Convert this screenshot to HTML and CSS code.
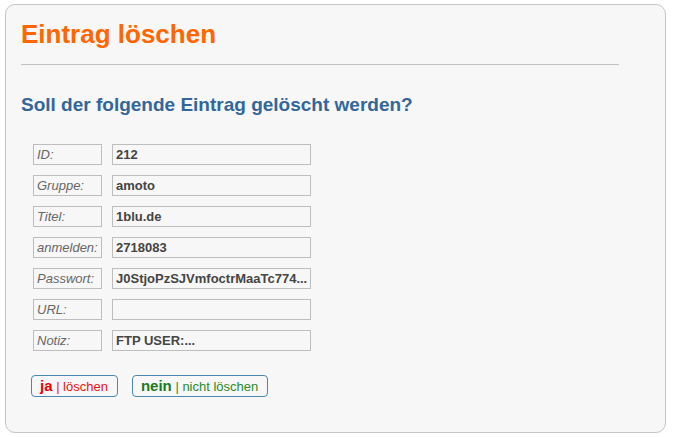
FILE: index.html
```html
<!DOCTYPE html>
<html lang="de">
<head>
<meta charset="utf-8">
<title>Eintrag löschen</title>
<link rel="stylesheet" href="styles.css">
</head>
<body>
<div class="panel">
  <h1 class="title">Eintrag löschen</h1>
  <hr class="rule">
  <h2 class="question">Soll der folgende Eintrag gelöscht werden?</h2>
  <table class="entry">
    <tr><td class="lbl">ID:</td><td class="val">212</td></tr>
    <tr><td class="lbl">Gruppe:</td><td class="val">amoto</td></tr>
    <tr><td class="lbl">Titel:</td><td class="val">1blu.de</td></tr>
    <tr><td class="lbl">anmelden:</td><td class="val">2718083</td></tr>
    <tr><td class="lbl">Passwort:</td><td class="val">J0StjoPzSJVmfoctrMaaTc774...</td></tr>
    <tr><td class="lbl">URL:</td><td class="val"></td></tr>
    <tr><td class="lbl">Notiz:</td><td class="val">FTP USER:...</td></tr>
  </table>
  <div class="actions">
    <a class="btn btn-yes" href="#"><b>ja</b> | löschen</a>
    <a class="btn btn-no" href="#"><b>nein</b> | nicht löschen</a>
  </div>
</div>
</body>
</html>
```
FILE: styles.css
```css
html, body {
  margin: 0;
  padding: 0;
  background: #ffffff;
  font-family: Arial, "Liberation Sans", sans-serif;
}
.panel {
  margin: 4px 7px 5px 5px;
  box-sizing: border-box;
  height: 429px;
  border: 1px solid #c4c4c4;
  border-radius: 10px;
  background: #f7f7f7;
  padding: 0 15px;
}
.title {
  margin: 0;
  padding-top: 14px;
  font-size: 26px;
  line-height: 30px;
  font-weight: bold;
  color: #ff6600;
}
.rule {
  width: 598px;
  margin: 15px 0 0 0;
  border: 0;
  border-top: 1px solid #c2c2c2;
  height: 0;
}
.question {
  margin: 29px 0 0 0;
  font-size: 19px;
  line-height: 22px;
  font-weight: bold;
  color: #336699;
}
.entry {
  margin: 18px 0 0 2px;
  border-collapse: separate;
  border-spacing: 10px;
}
.entry td {
  height: 19px;
  padding: 0 3px;
  border: 1px solid #bdbdbd;
  font-size: 13px;
  line-height: 19px;
  color: #444;
}
.lbl {
  width: 61px;
  font-style: italic;
  color: #666 !important;
}
.val {
  width: 190px;
  font-weight: bold;
  color: #3a3a3a;
}
.actions {
  margin-top: 14px;
  margin-left: 10px;
  display: flex;
  gap: 14px;
}
.btn {
  display: inline-block;
  height: 20px;
  line-height: 20px;
  padding: 0 9px 0 8px;
  border: 1px solid #4a88b0;
  border-radius: 4px;
  font-size: 13px;
  text-decoration: none;
}
.btn b {
  font-size: 15px;
}
.btn-yes { color: #ee1111; }
.btn-yes b { color: #ee0000; }
.btn-no { color: #2a8a2a; }
.btn-no b { color: #1b7a1b; }
```
